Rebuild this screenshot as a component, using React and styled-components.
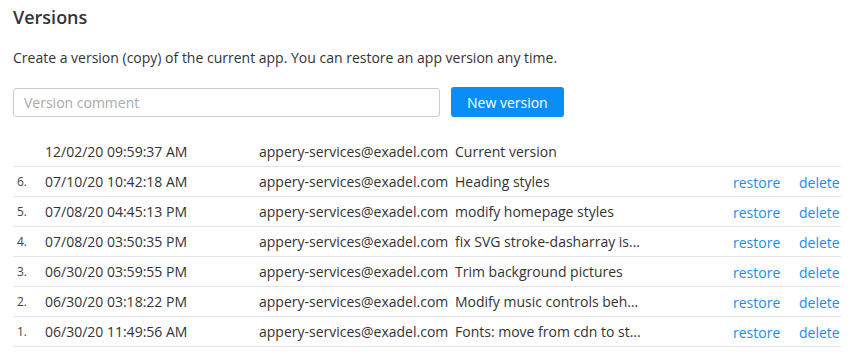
import React from 'react';
import styled, { createGlobalStyle } from 'styled-components';

const GlobalStyle = createGlobalStyle`
    body {
        margin: 0;
        background: #fff;
        font-family: 'Open Sans', sans-serif;
        color: #333;
    }
`
const Wrapper = styled.div`
    padding: 4px 22px 0 13px;
`
const Title = styled.h2`
    margin: 0;
    font-size: 18px;
    font-weight: 600;
    line-height: 26px;
    color: #333;
`
const Description = styled.p`
    margin: 18px 0 0;
    font-size: 14px;
    line-height: 20px;
`
const Form = styled.div`
    display: flex;
    align-items: center;
    gap: 11px;
    margin-top: 19px;
`
const Input = styled.input`
    width: 427px;
    height: 29px;
    box-sizing: border-box;
    border: 1px solid #ccc;
    border-radius: 3px;
    padding: 0 10px;
    font-family: 'Open Sans', sans-serif;
    font-size: 14px;
    color: #333;
    outline: none;
    &::placeholder {
        color: #aaa;
    }
`
const Button = styled.button`
    height: 30px;
    padding: 0 16px;
    border: 0;
    border-radius: 3px;
    background: #0a8ef5;
    color: #fff;
    font-family: 'Open Sans', sans-serif;
    font-size: 14px;
    cursor: pointer;
`
const Table = styled.div`
    margin-top: 20px;
`
const Row = styled.div`
    display: grid;
    grid-template-columns: 32px 214px 196px 190px 1fr 66px 42px;
    align-items: center;
    height: 30px;
    border-bottom: 1px solid #e6e6e6;
    box-sizing: border-box;
    font-size: 14px;
`
const Num = styled.span`
    padding-left: 4px;
    font-size: 12px;
    color: #444;
`
const Cell = styled.span`
    white-space: nowrap;
    overflow: hidden;
    text-overflow: ellipsis;
`
const Action = styled.a`
    padding-top: 2px;
    color: #1a8cf0;
    cursor: pointer;
    text-decoration: none;
`

const versions = [
    { n: '', date: '12/02/20 09:59:37 AM', comment: 'Current version', current: true },
    { n: '6.', date: '07/10/20 10:42:18 AM', comment: 'Heading styles' },
    { n: '5.', date: '07/08/20 04:45:13 PM', comment: 'modify homepage styles' },
    { n: '4.', date: '07/08/20 03:50:35 PM', comment: 'fix SVG stroke-dasharray issue in icons' },
    { n: '3.', date: '06/30/20 03:59:55 PM', comment: 'Trim background pictures' },
    { n: '2.', date: '06/30/20 03:18:22 PM', comment: 'Modify music controls behaviour' },
    { n: '1.', date: '06/30/20 11:49:56 AM', comment: 'Fonts: move from cdn to static files' },
]

const App = () => (
    <Wrapper>
        <GlobalStyle />
        <Title>Versions</Title>
        <Description>Create a version (copy) of the current app. You can restore an app version any time.</Description>
        <Form>
            <Input type="text" placeholder="Version comment" />
            <Button>New version</Button>
        </Form>
        <Table>
            {versions.map((v, i) => (
                <Row key={i}>
                    <Num>{v.n}</Num>
                    <Cell>{v.date}</Cell>
                    <Cell>appery-services@exadel.com</Cell>
                    <Cell title={v.comment}>{v.comment}</Cell>
                    <span />
                    {v.current ? <span /> : <Action>restore</Action>}
                    {v.current ? <span /> : <Action>delete</Action>}
                </Row>
            ))}
        </Table>
    </Wrapper>
)

export default App;
